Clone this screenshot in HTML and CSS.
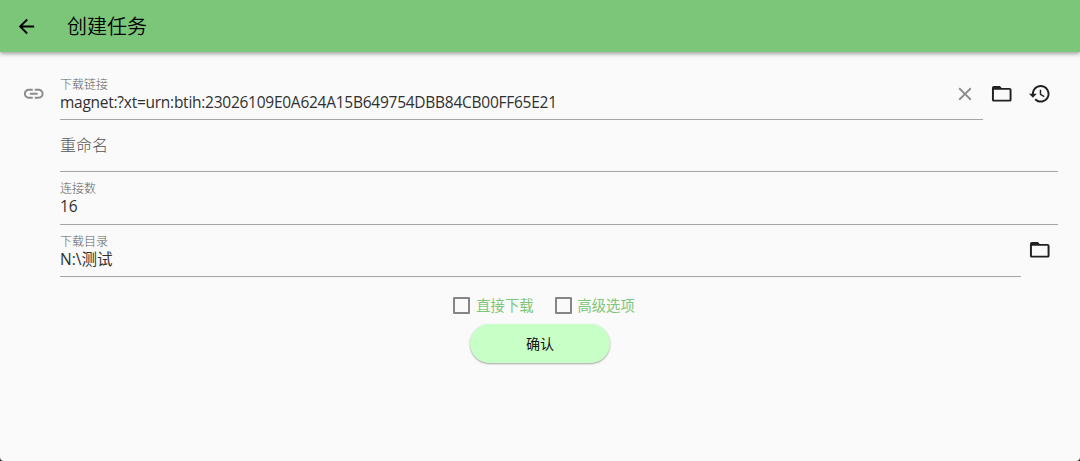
FILE: index.html
```html
<!DOCTYPE html>
<html lang="zh-CN">
<head>
    <meta charset="UTF-8">
    <title>创建任务</title>
    <link rel="stylesheet" href="styles.css">
</head>
<body>
<div class="window">
    <div class="header">
        <svg class="icon back" viewBox="0 0 24 24"><path d="M20 11H7.83l5.59-5.59L12 4l-8 8 8 8 1.41-1.41L7.83 13H20v-2z"/></svg>
        <h1 class="title">创建任务</h1>
    </div>
    <div class="form">
        <div class="row">
            <svg class="icon link" viewBox="0 0 24 24"><path d="M3.9 12c0-1.71 1.39-3.1 3.1-3.1h4V7H7c-2.76 0-5 2.24-5 5s2.24 5 5 5h4v-1.9H7c-1.71 0-3.1-1.39-3.1-3.1zM8 13h8v-2H8v2zm9-6h-4v1.9h4c1.71 0 3.1 1.39 3.1 3.1s-1.39 3.1-3.1 3.1h-4V17h4c2.76 0 5-2.24 5-5s-2.24-5-5-5z"/></svg>
            <div class="field">
                <div class="content">
                    <div class="label">下载链接</div>
                    <div class="value url">magnet:?xt=urn:btih:23026109E0A624A15B649754DBB84CB00FF65E21</div>
                </div>
                <svg class="icon clear" viewBox="0 0 24 24"><path d="M19 6.41L17.59 5 12 10.59 6.41 5 5 6.41 10.59 12 5 17.59 6.41 19 12 13.41 17.59 19 19 17.59 13.41 12z"/></svg>
            </div>
            <svg class="icon folder" viewBox="0 0 24 24"><path d="M20 6h-8l-2-2H4c-1.1 0-1.99.9-1.99 2L2 18c0 1.1.9 2 2 2h16c1.1 0 2-.9 2-2V8c0-1.1-.9-2-2-2zm0 12H4V8h16v10z"/></svg>
            <svg class="icon history" viewBox="0 0 24 24"><path d="M13 3c-4.97 0-9 4.03-9 9H1l3.89 3.89.07.14L9 12H6c0-3.87 3.13-7 7-7s7 3.13 7 7-3.13 7-7 7c-1.93 0-3.68-.79-4.94-2.06l-1.42 1.42C8.27 19.99 10.51 21 13 21c4.97 0 9-4.03 9-9s-4.03-9-9-9zm-1 5v5l4.28 2.54.72-1.21-3.5-2.08V8H12z"/></svg>
        </div>
        <div class="row">
            <div class="field">
                <div class="placeholder">重命名</div>
            </div>
        </div>
        <div class="row">
            <div class="field">
                <div class="content">
                    <div class="label">连接数</div>
                    <div class="value">16</div>
                </div>
            </div>
        </div>
        <div class="row">
            <div class="field">
                <div class="content">
                    <div class="label">下载目录</div>
                    <div class="value">N:\测试</div>
                </div>
            </div>
            <svg class="icon folder" viewBox="0 0 24 24"><path d="M20 6h-8l-2-2H4c-1.1 0-1.99.9-1.99 2L2 18c0 1.1.9 2 2 2h16c1.1 0 2-.9 2-2V8c0-1.1-.9-2-2-2zm0 12H4V8h16v10z"/></svg>
        </div>
    </div>
    <div class="options">
        <div class="option"><span class="checkbox"></span><span class="text">直接下载</span></div>
        <div class="option"><span class="checkbox"></span><span class="text">高级选项</span></div>
    </div>
    <div class="submit">确认</div>
</div>
</body>
</html>
```
FILE: styles.css
```css
*{
    margin: 0;
    padding: 0;
    box-sizing: border-box;
}
body{
    background: #222;
    font-family: "Open Sans", "Noto Sans CJK SC", sans-serif;
}
.window{
    height: 461px;
    background: #fafafa;
    border-radius: 0 0 4px 4px;
    overflow: hidden;
}
.icon{
    width: 23.5px;
    height: 23.5px;
    flex-shrink: 0;
    fill: #212121;
}
.header{
    display: flex;
    align-items: center;
    height: 52px;
    padding-left: 15px;
    background: #7bc679;
    box-shadow: 0 2px 4px rgba(0,0,0,.35);
}
.header .back{
    width: 23px;
    height: 23px;
    fill: #000;
}
.title{
    margin-left: 29px;
    padding-top: 2px;
    font-size: 20px;
    line-height: 28px;
    font-weight: 350;
    color: #000;
}
.form{
    padding: 16px 22px 0 60px;
}
.row{
    display: flex;
    height: 52.2px;
}
.field{
    flex: 1;
    display: flex;
    border-bottom: 1px solid #a5a5a5;
}
.content{
    flex: 1;
    padding-top: 8px;
}
.label{
    font-size: 12px;
    line-height: 17px;
    font-weight: 300;
    color: #606060;
}
.value{
    font-size: 15.5px;
    line-height: 19px;
    color: #303030;
}
.url{
    letter-spacing: -.26px;
}
.placeholder{
    padding-top: 14px;
    font-size: 16px;
    line-height: 23px;
    font-weight: 300;
    color: #555;
}
.row .link{
    margin: 13.7px 14.5px 0 -38px;
    fill: #8b8b8b;
}
.row .clear{
    width: 22px;
    height: 22px;
    margin: 14.7px 7.5px 0 0;
    fill: #8b8b8b;
}
.row .folder{
    margin: 13.7px 7px 0 7px;
}
.row .history{
    margin: 13.7px 7px 0 7px;
}
.options{
    display: flex;
    justify-content: center;
    gap: 21px;
    padding-top: 18.2px;
    margin-left: 8px;
}
.option{
    display: flex;
    align-items: center;
    height: 22px;
    font-size: 14.3px;
    color: #7bc679;
}
.option .text{
    padding-bottom: 3px;
}
.checkbox{
    width: 17px;
    height: 17px;
    margin-right: 6px;
    border: 2px solid #858585;
    border-radius: 1px;
}
.submit{
    width: 140px;
    height: 39px;
    margin: 7px auto 0;
    border-radius: 20px;
    background: #c8ffc7;
    box-shadow: 0 1px 2px rgba(0,0,0,.35);
    font-size: 14px;
    line-height: 39px;
    text-align: center;
    color: #111;
}
```
